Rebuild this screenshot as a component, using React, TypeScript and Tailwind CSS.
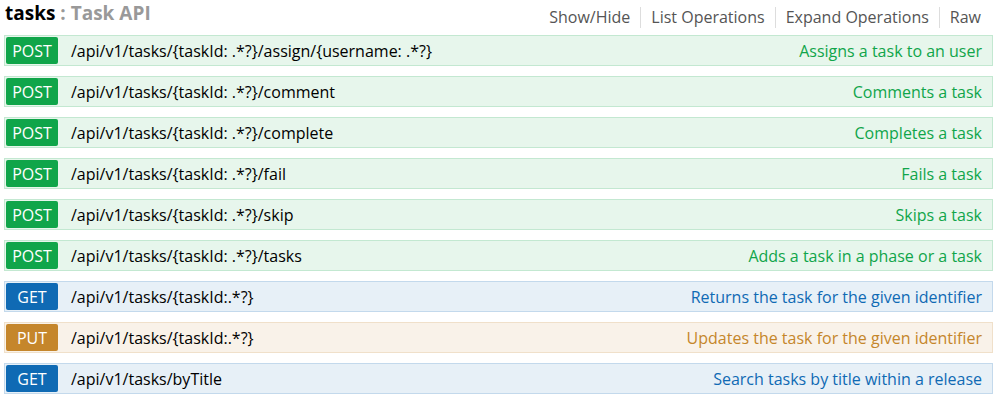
const ops = [
  { method: "POST", path: "/api/v1/tasks/{taskId: .*?}/assign/{username: .*?}", desc: "Assigns a task to an user" },
  { method: "POST", path: "/api/v1/tasks/{taskId: .*?}/comment", desc: "Comments a task" },
  { method: "POST", path: "/api/v1/tasks/{taskId: .*?}/complete", desc: "Completes a task" },
  { method: "POST", path: "/api/v1/tasks/{taskId: .*?}/fail", desc: "Fails a task" },
  { method: "POST", path: "/api/v1/tasks/{taskId: .*?}/skip", desc: "Skips a task" },
  { method: "POST", path: "/api/v1/tasks/{taskId: .*?}/tasks", desc: "Adds a task in a phase or a task" },
  { method: "GET", path: "/api/v1/tasks/{taskId:.*?}", desc: "Returns the task for the given identifier" },
  { method: "PUT", path: "/api/v1/tasks/{taskId:.*?}", desc: "Updates the task for the given identifier" },
  { method: "GET", path: "/api/v1/tasks/byTitle", desc: "Search tasks by title within a release" },
];

const styles: Record<string, { row: string; badge: string; desc: string }> = {
  POST: {
    row: "bg-[#e7f6ec] border-[#c3e8d1]",
    badge: "bg-[#10a54a]",
    desc: "text-[#10a54a]",
  },
  GET: {
    row: "bg-[#e7f0f7] border-[#c3d9ec]",
    badge: "bg-[#0f6ab4]",
    desc: "text-[#0f6ab4]",
  },
  PUT: {
    row: "bg-[#f9f2e9] border-[#f0e0ca]",
    badge: "bg-[#c5862b]",
    desc: "text-[#c5862b]",
  },
};

export default function App() {
  return (
    <div
      className="w-[1000px] h-[400px] bg-white pl-[4px] pr-[7px]"
      style={{ fontFamily: '"Open Sans", "DejaVu Sans", sans-serif' }}
    >
      <div className="h-[35px] flex justify-between">
        <h2 className="text-[19px] font-bold leading-none pt-[4px] pl-[1px]">
          <span className="text-black">tasks</span>
          <span className="text-[#999]"> : Task API</span>
        </h2>
        <ul className="flex items-start pt-[7px] pr-[12px] text-[16px] leading-[21px] text-[#555]">
          <li className="px-[10px] border-r border-[#ddd]">Show/Hide</li>
          <li className="px-[10px] border-r border-[#ddd]">List Operations</li>
          <li className="px-[10px] border-r border-[#ddd]">Expand Operations</li>
          <li className="pl-[10px]">Raw</li>
        </ul>
      </div>
      <ul className="flex flex-col gap-[10px]">
        {ops.map((op, i) => {
          const s = styles[op.method];
          return (
            <li
              key={i}
              className={`h-[31px] border flex items-center ${s.row}`}
            >
              <span
                className={`ml-[1px] w-[52px] h-[27px] rounded-[2px] flex items-center justify-center text-white text-[16px] ${s.badge}`}
              >
                {op.method}
              </span>
              <span className="ml-[13px] text-[16px] text-black">{op.path}</span>
              <span className={`ml-auto pr-[10px] text-[16px] ${s.desc}`}>
                {op.desc}
              </span>
            </li>
          );
        })}
      </ul>
    </div>
  );
}
